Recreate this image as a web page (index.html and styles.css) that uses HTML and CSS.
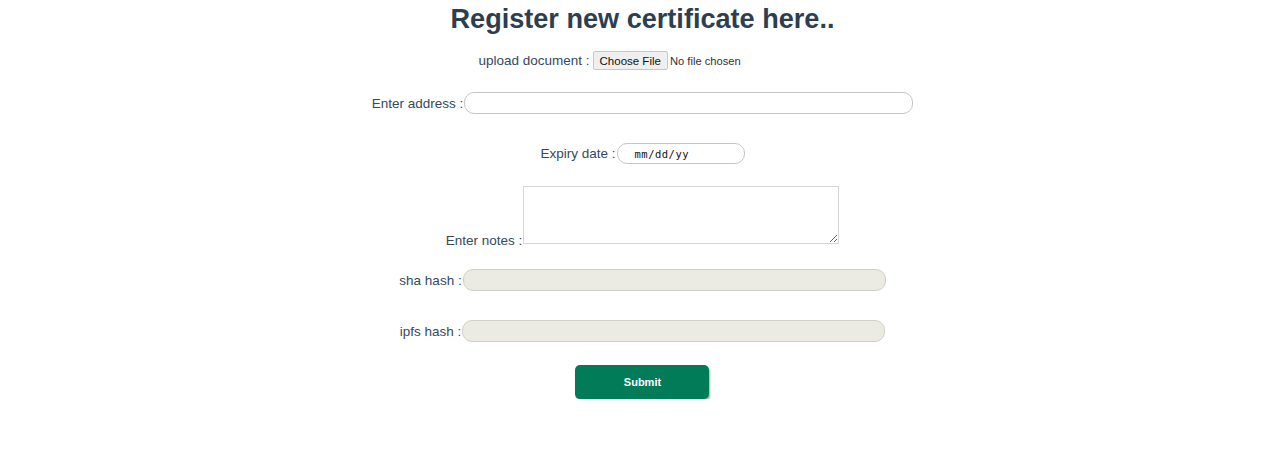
FILE: index.html
```html
<!DOCTYPE html>
<html lang="en">
<head>
<meta charset="utf-8">
<title>Register certificate</title>
<link rel="stylesheet" href="styles.css">
</head>
<body>
<main class="page">
  <h1 class="title">Register new certificate here..</h1>
  <form class="form">
    <div class="row row-upload">
      <label class="label" for="doc">upload document :</label>
      <input class="file" id="doc" type="file">
    </div>
    <div class="row row-address">
      <label class="label" for="addr">Enter address :</label>
      <input class="text address" id="addr" type="text">
    </div>
    <div class="row row-expiry">
      <label class="label" for="exp">Expiry date :</label>
      <div class="text date" id="exp">mm/dd/yy</div>
    </div>
    <div class="row row-notes">
      <label class="label" for="notes">Enter notes :</label>
      <textarea class="notes" id="notes"></textarea>
    </div>
    <div class="row row-sha">
      <label class="label" for="sha">sha hash :</label>
      <input class="text hash" id="sha" type="text" disabled>
    </div>
    <div class="row row-ipfs">
      <label class="label" for="ipfs">ipfs hash :</label>
      <input class="text hash" id="ipfs" type="text" disabled>
    </div>
    <div class="row row-submit">
      <button class="submit" type="button">Submit</button>
    </div>
  </form>
</main>
</body>
</html>
```

FILE: styles.css
```css
html, body {
  margin: 0;
  padding: 0;
  background: #ffffff;
}

body {
  font-family: "Liberation Sans", Arial, sans-serif;
  color: #34495e;
}

.page {
  display: flex;
  flex-direction: column;
  align-items: center;
  padding-left: 5px;
}

.title {
  margin: 0;
  padding-top: 3px;
  font-size: 27.1px;
  line-height: 32px;
  font-weight: 700;
  color: #2c3e50;
}

.form {
  display: flex;
  flex-direction: column;
  align-items: center;
}

.row {
  display: flex;
  align-items: center;
}

.label {
  font-size: 13.5px;
  color: #34495e;
  margin-right: 1px;
}

.row-upload { margin-top: 16px; }
.row-address { margin-top: 22px; }
.row-expiry { margin-top: 29px; }
.row-notes { margin-top: 22px; align-items: flex-end; }
.row-sha { margin-top: 25px; }
.row-ipfs { margin-top: 29px; }
.row-submit { margin-top: 23px; }

.row-upload .label { margin-right: 3px; }

.row-notes .label {
  line-height: 1;
  margin-bottom: -3px;
}

.file {
  width: 214px;
  font-family: "Liberation Sans", Arial, sans-serif;
  font-size: 11.2px;
  color: #333;
}

.file::file-selector-button {
  font-family: "Liberation Sans", Arial, sans-serif;
  font-size: 11.5px;
  height: 19px;
  padding: 0 6px;
  margin-right: 2px;
  border: 1px solid #c8c8c8;
  border-radius: 2px;
  background: #efefef;
  color: #111;
}

.text {
  box-sizing: border-box;
  height: 22px;
  border: 1px solid #c6c6c6;
  border-radius: 10px;
  background: #fff;
  padding: 0 10px;
  font-family: "Liberation Sans", Arial, sans-serif;
  font-size: 13px;
}

.address { width: 449px; }

.date {
  width: 128px;
  height: 21px;
  display: flex;
  align-items: center;
  padding-left: 17px;
  font-family: "DejaVu Sans Mono", "Liberation Mono", monospace;
  font-size: 10.5px;
  letter-spacing: 0.5px;
  color: #111;
}

.notes {
  box-sizing: border-box;
  width: 316px;
  height: 58px;
  margin: 0;
  border: 1px solid #d6d6d6;
  border-radius: 0;
  resize: both;
  font-family: "Liberation Sans", Arial, sans-serif;
}

.hash {
  width: 423px;
  background: #ebebe4;
  border-color: #d0d0c8;
}

.submit {
  width: 134px;
  height: 34px;
  border: none;
  border-radius: 5px;
  background: #027b58;
  color: #fff;
  font-family: "Liberation Sans", Arial, sans-serif;
  font-size: 11px;
  font-weight: 700;
  box-shadow: 1px 2px 2px rgba(0, 0, 0, 0.35);
  cursor: pointer;
}
```
